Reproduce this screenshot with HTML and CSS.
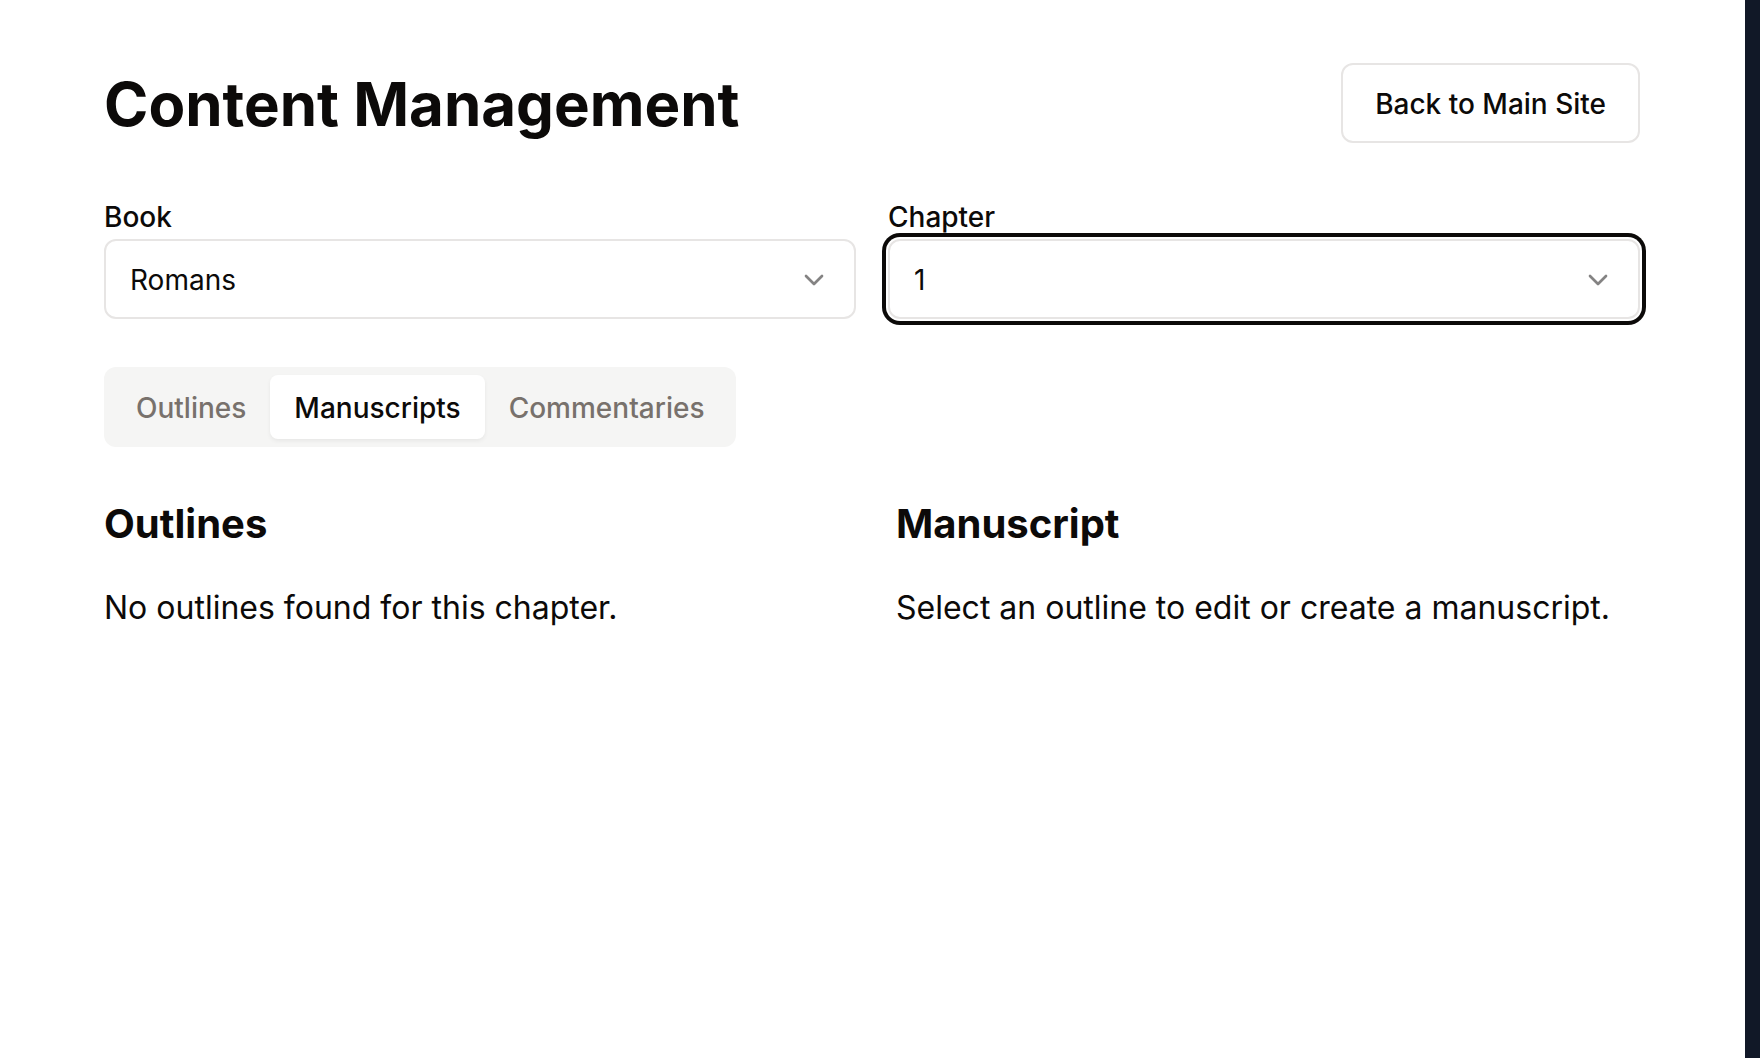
FILE: index.html
```html
<!DOCTYPE html>
<html lang="en">
<head>
<meta charset="utf-8">
<title>Content Management</title>
<link rel="stylesheet" href="styles.css">
</head>
<body>
<div class="page">
  <main class="main">
    <header class="header">
      <h1 class="title">Content Management</h1>
      <button class="btn-outline" type="button">Back to Main Site</button>
    </header>

    <section class="selectors">
      <div class="field">
        <label class="label">Book</label>
        <div class="select">
          <span class="select-value">Romans</span>
          <svg class="chevron" viewBox="0 0 24 24" fill="none" stroke="currentColor" stroke-width="2" stroke-linecap="round" stroke-linejoin="round"><path d="m6 9 6 6 6-6"/></svg>
        </div>
      </div>
      <div class="field">
        <label class="label">Chapter</label>
        <div class="select select-focused">
          <span class="select-value">1</span>
          <svg class="chevron" viewBox="0 0 24 24" fill="none" stroke="currentColor" stroke-width="2" stroke-linecap="round" stroke-linejoin="round"><path d="m6 9 6 6 6-6"/></svg>
        </div>
      </div>
    </section>

    <nav class="tabs">
      <span class="tab">Outlines</span>
      <span class="tab tab-active">Manuscripts</span>
      <span class="tab">Commentaries</span>
    </nav>

    <section class="panels">
      <div class="panel">
        <h2 class="panel-title">Outlines</h2>
        <p class="panel-text">No outlines found for this chapter.</p>
      </div>
      <div class="panel">
        <h2 class="panel-title">Manuscript</h2>
        <p class="panel-text">Select an outline to edit or create a manuscript.</p>
      </div>
    </section>
  </main>
  <div class="side-strip"></div>
</div>
</body>
</html>
```

FILE: styles.css
```css
* {
  box-sizing: border-box;
}

html, body {
  margin: 0;
  padding: 0;
  height: 100%;
}

body {
  font-family: Inter, "Noto Sans", sans-serif;
  color: #0c0a09;
  background: #ffffff;
}

.page {
  display: flex;
  height: 1058px;
  overflow: hidden;
}

.main {
  flex: 1;
  padding: 63px 105px 0 104px;
}

.side-strip {
  width: 15px;
  flex: none;
  background: #111827;
}

.header {
  display: flex;
  align-items: center;
  justify-content: space-between;
  height: 80px;
  margin-bottom: 60px;
}

.title {
  margin: 0;
  padding-top: 2px;
  font-size: 60px;
  line-height: 72px;
  font-weight: 700;
}

.btn-outline {
  height: 80px;
  padding: 2px 32px 0 32px;
  border: 2px solid #e7e5e4;
  border-radius: 12px;
  background: #ffffff;
  font-family: Inter, "Noto Sans", sans-serif;
  font-size: 28px;
  font-weight: 500;
  color: #0c0a09;
}

.selectors {
  display: grid;
  grid-template-columns: 1fr 1fr;
  gap: 32px;
  margin-bottom: 48px;
}

.field {
  display: flex;
  flex-direction: column;
  gap: 8px;
}

.label {
  font-size: 28px;
  line-height: 28px;
  font-weight: 500;
}

.select {
  display: flex;
  align-items: center;
  justify-content: space-between;
  height: 80px;
  padding: 2px 24px 0 24px;
  border: 2px solid #e7e5e4;
  border-radius: 12px;
  background: #ffffff;
  font-size: 28px;
}

.select-focused {
  box-shadow: 0 0 0 2px #ffffff, 0 0 0 6px #0c0a09;
}

.chevron {
  width: 32px;
  height: 32px;
  color: #0c0a09;
  opacity: 0.5;
}

.tabs {
  display: inline-flex;
  align-items: center;
  height: 80px;
  padding: 8px;
  border-radius: 12px;
  background: #f5f5f4;
}

.tab {
  display: flex;
  align-items: center;
  height: 64px;
  padding: 2px 24px 0 24px;
  border-radius: 8px;
  font-size: 28px;
  font-weight: 500;
  color: #78716c;
}

.tab-active {
  background: #ffffff;
  color: #0c0a09;
  box-shadow: 0 2px 4px rgba(0, 0, 0, 0.06);
}

.panels {
  display: grid;
  grid-template-columns: 1fr 1fr;
  gap: 48px;
  margin-top: 49px;
}

.panel-title {
  margin: 0 0 32px 0;
  font-size: 40px;
  line-height: 56px;
  font-weight: 700;
}

.panel-text {
  margin: 0;
  font-size: 32px;
  line-height: 48px;
}
```
